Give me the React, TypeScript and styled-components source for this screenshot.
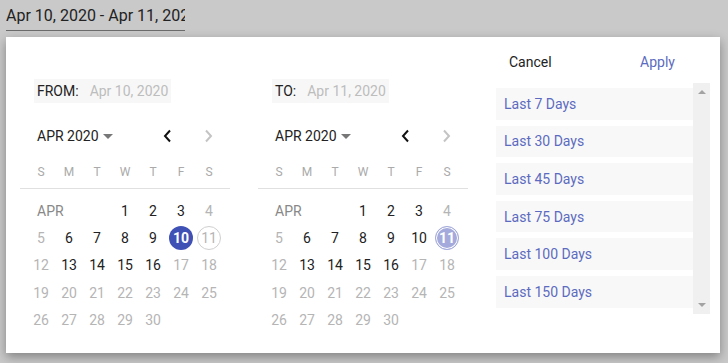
import styled, { createGlobalStyle, css } from 'styled-components'

const GlobalStyle = createGlobalStyle`
  html, body {
    margin: 0;
    padding: 0;
    background: #c9c9c9;
    font-family: Roboto, 'Noto Sans', Arial, sans-serif;
  }
`

const Page = styled.div`
  width: 728px;
  height: 363px;
  background: #c9c9c9;
  padding-left: 6px;
  box-sizing: border-box;
  overflow: hidden;
`

const RangeInput = styled.div`
  width: 179px;
  padding-top: 6px;
  padding-bottom: 4px;
  line-height: 20px;
  font-size: 16px;
  color: #222;
  white-space: nowrap;
  overflow: hidden;
  border-bottom: 1px solid #6b6b6b;
`

const Panel = styled.div`
  margin-top: 6px;
  width: 714px;
  height: 316px;
  background: #fff;
  box-shadow: 0 4px 10px rgba(0, 0, 0, 0.35);
  display: flex;
  padding-left: 14px;
  box-sizing: border-box;
  gap: 28px;
`

const Calendar = styled.div`
  width: 210px;
  padding-top: 42px;
  display: flex;
  flex-direction: column;
`

const DateField = styled.div`
  align-self: flex-start;
  margin-left: 14px;
  height: 24px;
  padding: 0 3px;
  display: flex;
  align-items: center;
  gap: 11px;
  background: #f7f7f7;
  font-size: 14px;
`

const FieldLabel = styled.span`
  color: #222;
`

const FieldValue = styled.span`
  color: #bdbdbd;
`

const MonthHeader = styled.div`
  margin-top: 19px;
  height: 28px;
  display: flex;
  align-items: center;
  padding: 0 2px 0 17px;
`

const MonthTitle = styled.span`
  font-size: 14px;
  color: #222;
`

const Caret = styled.span`
  margin-left: 4px;
  width: 0;
  height: 0;
  border-left: 5px solid transparent;
  border-right: 5px solid transparent;
  border-top: 5px solid #777;
`

const Spacer = styled.div`
  flex: 1;
`

const NavButton = styled.div`
  width: 40px;
  height: 28px;
  display: flex;
  align-items: center;
  justify-content: center;
`

const WeekRow = styled.div`
  display: grid;
  grid-template-columns: repeat(7, 28px);
  padding: 6px 7px 0;
  height: 32px;
  align-items: center;
  border-bottom: 1px solid #e0e0e0;
`

const WeekDay = styled.span`
  text-align: center;
  font-size: 12px;
  color: #aaa;
`

const DayGrid = styled.div`
  display: grid;
  grid-template-columns: repeat(7, 28px);
  grid-auto-rows: 27.3px;
  padding: 8px 7px 0;
`

const MonthLabel = styled.div`
  grid-column: span 3;
  display: flex;
  align-items: center;
  padding-left: 10px;
  font-size: 14px;
  color: #888;
`

type DayKind = 'active' | 'muted' | 'start' | 'end' | 'ghost'

const Day = styled.div<{ $kind: DayKind }>`
  display: flex;
  align-items: center;
  justify-content: center;

  span {
    width: 24px;
    height: 24px;
    box-sizing: border-box;
    border-radius: 50%;
    display: flex;
    align-items: center;
    justify-content: center;
    font-size: 14px;
    color: ${({ $kind }) => ($kind === 'active' ? '#222' : '#b5b5b5')};
  }

  ${({ $kind }) =>
    $kind === 'start' &&
    css`
      span {
        background: #3f51b5;
        color: #fff;
        font-weight: 700;
      }
    `}

  ${({ $kind }) =>
    $kind === 'ghost' &&
    css`
      span {
        border: 1px solid #cfcfcf;
      }
    `}

  ${({ $kind }) =>
    $kind === 'end' &&
    css`
      span {
        background: #a4abdc;
        border: 1px solid #a4abdc;
        box-shadow: inset 0 0 0 1px #fff;
        color: #fff;
        font-weight: 700;
      }
    `}
`

const Presets = styled.div`
  width: 214px;
  display: flex;
  flex-direction: column;
`

const Actions = styled.div`
  margin-top: 12px;
  height: 26px;
  display: flex;
  align-items: center;
  justify-content: space-between;
  padding: 0 35px 0 13px;
  font-size: 14px;
`

const ActionButton = styled.span<{ $primary?: boolean }>`
  color: ${({ $primary }) => ($primary ? '#5c6bc0' : '#222')};
  cursor: pointer;
`

const ListFrame = styled.div`
  margin-top: 8px;
  height: 231px;
  display: flex;
`

const List = styled.div`
  flex: 1;
  overflow: hidden;
  padding-top: 5px;
  display: flex;
  flex-direction: column;
  gap: 6px;
`

const PresetItem = styled.div`
  flex-shrink: 0;
  height: 31.6px;
  padding-left: 8px;
  display: flex;
  align-items: center;
  background: #f8f8f8;
  color: #5c6bc0;
  font-size: 14px;
  cursor: pointer;
`

const ScrollTrack = styled.div`
  width: 17px;
  background: #f0f0f0;
  display: flex;
  flex-direction: column;
  justify-content: space-between;
  align-items: center;
  padding: 7px 0;
  box-sizing: border-box;
`

const Arrow = styled.span<{ $down?: boolean }>`
  width: 0;
  height: 0;
  border-left: 4px solid transparent;
  border-right: 4px solid transparent;
  ${({ $down }) =>
    $down
      ? css`
          border-top: 4px solid #a3a3a3;
        `
      : css`
          border-bottom: 4px solid #a3a3a3;
        `}
`

const Chevron = ({ dir, color }: { dir: 'left' | 'right'; color: string }) => (
  <svg width="10" height="14" viewBox="0 0 10 14">
    <polyline
      points={dir === 'left' ? '7,1.5 2,7 7,12.5' : '3,1.5 8,7 3,12.5'}
      fill="none"
      stroke={color}
      strokeWidth="2"
    />
  </svg>
)

const weekDays = ['S', 'M', 'T', 'W', 'T', 'F', 'S']
const activeDays = [1, 2, 3, 6, 7, 8, 9, 13, 14, 15, 16]

function dayKind(day: number, which: 'from' | 'to'): DayKind {
  if (which === 'from') {
    if (day === 10) return 'start'
    if (day === 11) return 'ghost'
  } else {
    if (day === 11) return 'end'
    if (day === 10) return 'active'
  }
  return activeDays.includes(day) ? 'active' : 'muted'
}

function MonthCalendar({
  label,
  value,
  which,
}: {
  label: string
  value: string
  which: 'from' | 'to'
}) {
  const days = Array.from({ length: 30 }, (_, i) => i + 1)

  return (
    <Calendar>
      <DateField>
        <FieldLabel>{label}</FieldLabel>
        <FieldValue>{value}</FieldValue>
      </DateField>

      <MonthHeader>
        <MonthTitle>APR 2020</MonthTitle>
        <Caret />
        <Spacer />
        <NavButton>
          <Chevron dir="left" color="#111" />
        </NavButton>
        <NavButton>
          <Chevron dir="right" color="#c4c4c4" />
        </NavButton>
      </MonthHeader>

      <WeekRow>
        {weekDays.map((d, i) => (
          <WeekDay key={i}>{d}</WeekDay>
        ))}
      </WeekRow>

      <DayGrid>
        <MonthLabel>APR</MonthLabel>
        {days.map((day) => (
          <Day key={day} $kind={dayKind(day, which)}>
            <span>{day}</span>
          </Day>
        ))}
      </DayGrid>
    </Calendar>
  )
}

const presets = [7, 30, 45, 75, 100, 150]

export default function App() {
  return (
    <Page>
      <GlobalStyle />
      <RangeInput>Apr 10, 2020 - Apr 11, 2020</RangeInput>

      <Panel>
        <MonthCalendar label="FROM:" value="Apr 10, 2020" which="from" />
        <MonthCalendar label="TO:" value="Apr 11, 2020" which="to" />

        <Presets>
          <Actions>
            <ActionButton>Cancel</ActionButton>
            <ActionButton $primary>Apply</ActionButton>
          </Actions>
          <ListFrame>
            <List>
              {presets.map((n) => (
                <PresetItem key={n}>Last {n} Days</PresetItem>
              ))}
            </List>
            <ScrollTrack>
              <Arrow />
              <Arrow $down />
            </ScrollTrack>
          </ListFrame>
        </Presets>
      </Panel>
    </Page>
  )
}
